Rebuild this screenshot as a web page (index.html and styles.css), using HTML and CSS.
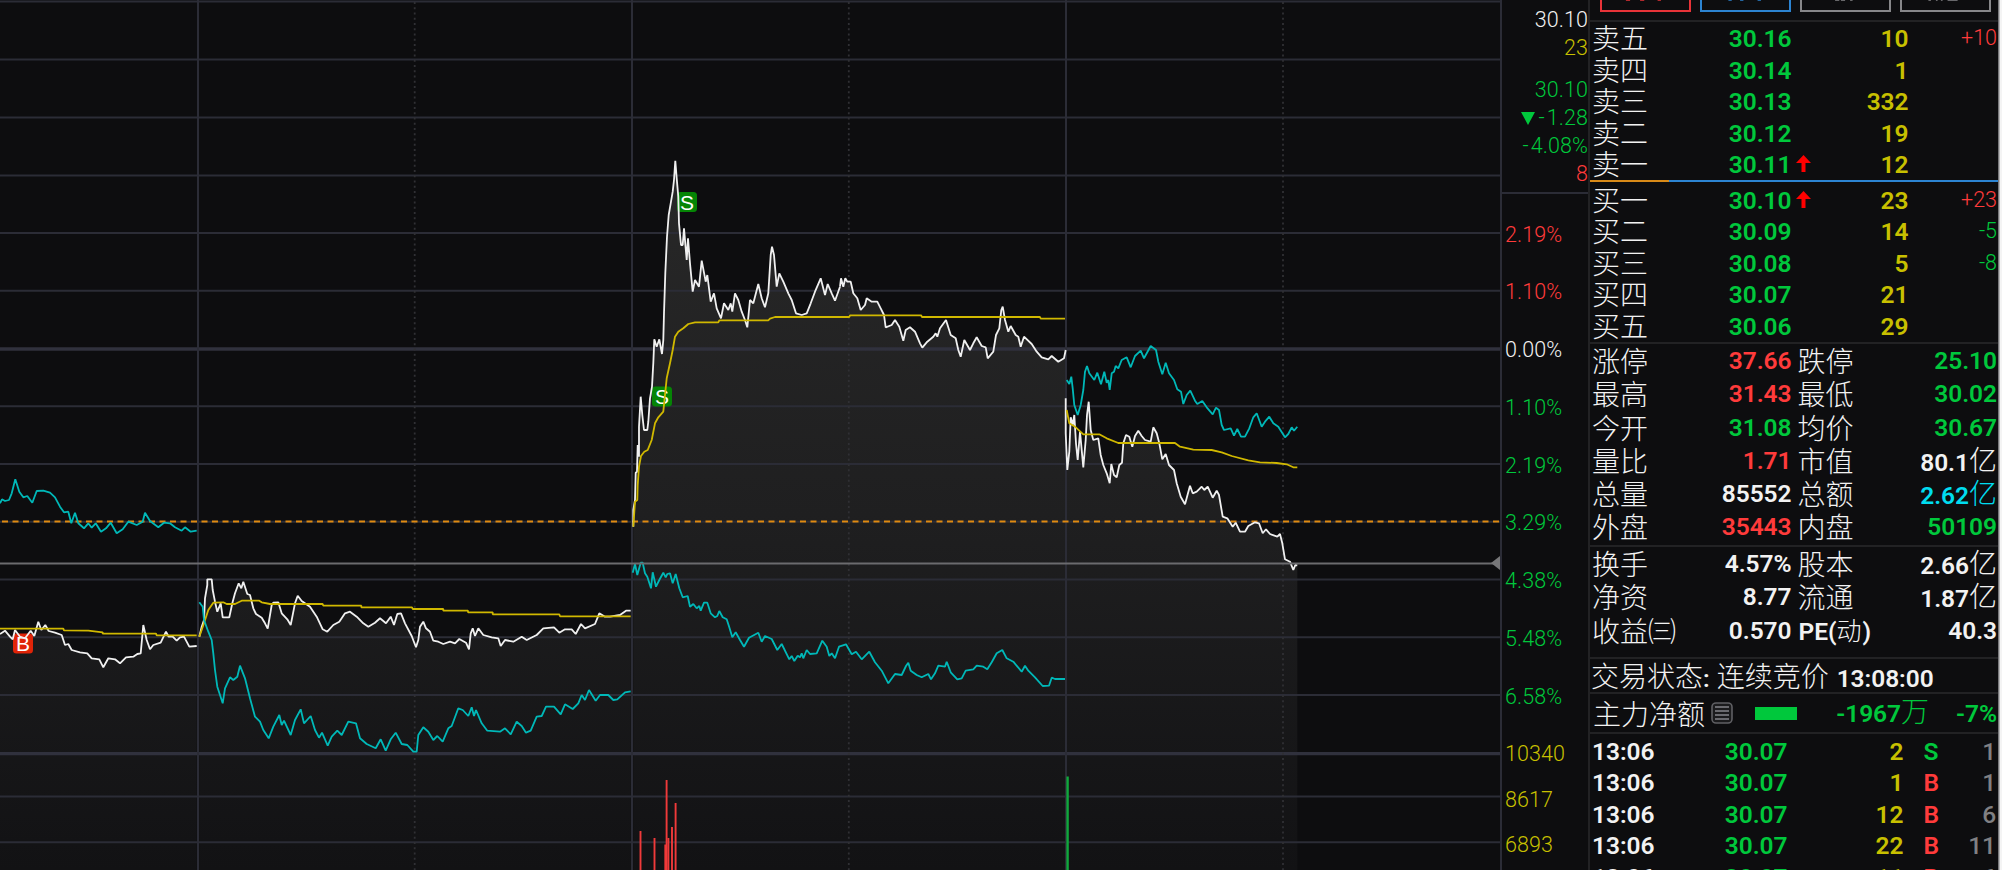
FILE: index.html
```html
<!DOCTYPE html>
<html lang="zh-CN">
<head>
<meta charset="utf-8">
<title>分时走势</title>
<link rel="stylesheet" href="styles.css">
</head>
<body>
<main class="app">
  <svg class="chart" id="chart" viewBox="0 0 1500 870" width="1500" height="870">
    <defs>
      <linearGradient id="area" gradientUnits="userSpaceOnUse" x1="0" y1="160" x2="0" y2="870">
        <stop offset="0" stop-color="#282828"/>
        <stop offset=".5" stop-color="#1f1f20"/>
        <stop offset="1" stop-color="#121214"/>
      </linearGradient>
    </defs>
    <g id="areas" fill="url(#area)"></g>
    <g id="grid"></g>
    <g id="badges"></g>
    <g id="lines"></g>
    <g id="volume"></g>
    <path d="M0 563.5H1500" stroke="#6b6b6e" stroke-width="2"/>
    <path d="M1500 556v14l-9-7z" fill="#777779"/>
  </svg>

  <section class="axis">
    <div class="tip">
      <span class="white">30.10</span><span class="yellow">23</span>
      <span class="green gap">30.10</span><span class="green"><svg class="down" viewBox="0 0 14 13"><path d="M0 0h14L7 13z" fill="#00c83c"/></svg><i class="minus">-</i>1.28</span>
      <span class="green"><i class="minus">-</i>4.08%</span><span class="red">8</span>
    </div>
    <div class="scale" id="scale"></div>
  </section>

  <aside class="panel">
    <div class="tabs">
      <svg class="tab t-red" viewBox="0 0 91 12"><path d="M22 0h5M39 0h5M60 0h4"/></svg>
      <svg class="tab t-blue" viewBox="0 0 91 12"><path d="M25 0h4M39 0h4M60 0h4"/></svg>
      <svg class="tab t-grey" viewBox="0 0 91 12"><path d="M33 0h5M40 0h5M51 0h3"/></svg>
      <svg class="tab t-grey" viewBox="0 0 91 12"><path d="M25 0h3M34 0h2M40 0h2M48 0h12"/></svg>
    </div>
    <div class="book asks" id="asks"></div>
    <div class="split"></div>
    <div class="book bids" id="bids"></div>
    <div class="stats s1" id="stats1"></div>
    <div class="stats s2" id="stats2"></div>
    <div class="status"><span class="cn">交易状态</span><b>:</b><span class="cn sp">连续竞价</span><b class="clock">13:08:00</b></div>
    <div class="net">
      <span class="cn">主力净额</span>
      <svg class="doc" viewBox="0 0 22 22"><rect x="1" y="1" width="20" height="20" rx="4" fill="#1b1b1d" stroke="#606064" stroke-width="1.6"/><path d="M4 5h14M4 9h14M4 13h14M4 17h14" stroke="#85858a" stroke-width="1.4"/></svg>
      <i class="bar"></i>
      <span class="amount green"><b>-1967</b><span class="cn">万</span></span>
      <b class="pct green">-7%</b>
    </div>
    <div class="trades" id="trades"></div>
  </aside>
  <div class="edge"></div>
</main>
<script src="main.js"></script>
</body>
</html>
```

FILE: styles.css
```css
body {
  margin: 0;
  background: #0d0d0f;
  font-family: Roboto, "Noto Sans CJK SC", sans-serif;
  color: #f2f2f2;
}
.app {
  display: flex;
  width: 2002px;
  height: 870px;
  overflow: hidden;
}
.chart { display: block; flex: none; }
.chart text {
  font-family: "Liberation Sans", sans-serif;
  font-size: 21px;
  text-anchor: middle;
  fill: #fff;
}

.white { color: #f2f2f2; }
.yellow { color: #c8c000; }
.green { color: #00c83c; }
.red { color: #ff3b3b; }
.cyan { color: #00dcf0; }
.grey { color: #808083; }
.cn {
  font-family: "Noto Sans CJK SC", sans-serif;
  font-size: 28px;
  font-weight: 300;
}
b {
  font-size: 24.5px;
  font-weight: 600;
  letter-spacing: -0.05px;
}

.axis {
  box-sizing: border-box;
  width: 90px;
  flex: none;
  border-left: 2px solid #2b2c36;
  border-right: 2px solid #222224;
  font-size: 21.5px;
  font-weight: 300;
  letter-spacing: 0.1px;
}
.tip {
  box-sizing: border-box;
  height: 194px;
  padding: 6px 0 0 0;
  border-bottom: 2px solid #2b2c36;
  display: flex;
  flex-direction: column;
  align-items: flex-end;
  line-height: 28px;
}
.tip .gap { margin-top: 14px; }
.down { width: 14px; height: 13px; margin-right: 3px; }
.minus { font-style: normal; margin-right: 2px; }
.scale { padding: 11.5px 0 0 3px; }
.scale div {
  height: 57.75px;
  line-height: 57.75px;
}
.scale .vol { height: 45.5px; }

.panel {
  width: 408px;
  height: 870px;
  flex: none;
  display: flex;
  flex-direction: column;
  overflow: hidden;
}
.panel > div { box-sizing: border-box; flex: none; }
.tabs {
  height: 22px;
  display: flex;
  gap: 9px;
  padding-left: 10px;
  border-bottom: 2px solid #222224;
}
.tab {
  box-sizing: border-box;
  width: 91px;
  height: 12px;
  border: 2px solid;
  border-top: 0;
  stroke: currentColor;
  stroke-width: 2;
  overflow: hidden;
}
.t-red { color: #e83338; }
.t-blue { color: #2c84d2; }
.t-grey { color: #87878a; }

.book .row {
  display: grid;
  grid-template-columns: 119px 82.5px 117px 88.5px;
  height: 31.5px;
  line-height: 31.5px;
  text-align: right;
}
.row { white-space: nowrap; }
.row .cn { text-align: left; padding-left: 2px; }
.book b { padding-top: 1px; }
.asks { height: 157.5px; }
.split {
  height: 2px;
  background: linear-gradient(90deg, #d88a18 79px, #2c84d2 79px);
}
.bids {
  height: 162.5px;
  padding-top: 2px;
  border-bottom: 2px solid #222224;
}
.price { position: relative; }
.price .up {
  position: absolute;
  left: 87px;
  top: 7px;
  width: 15px;
  height: 17px;
}
.delta { font-size: 21.5px; font-weight: 300; }

.stats .row {
  display: grid;
  grid-template-columns: 119px 82.5px 4px 85px 116.5px;
  height: 33.3px;
  line-height: 33.3px;
  text-align: right;
}
.stats .label2 { text-align: left; padding-left: 2px; }
.stats .label2 b { margin-left: 1px; }
.stats .label2 .cn { padding: 0; font-size: 28px; }
.stats .label2 .small { font-size: 25px; }
.stats .value .cn { padding: 0; }
.stats .nudge { margin-top: -1px; }
.s1 {
  height: 203px;
  border-bottom: 2px solid #222224;
}
.s2 {
  height: 112px;
  border-bottom: 2px solid #222224;
}
.status {
  height: 35px;
  line-height: 33px;
  padding-left: 1px;
  border-bottom: 2px solid #222224;
}
.status .sp { margin-left: 7px; }
.status .clock { margin-left: 8px; }
.net {
  height: 40px;
  line-height: 37px;
  padding: 0 1px 0 3px;
  display: flex;
  align-items: center;
  border-bottom: 2px solid #222224;
}
.doc { width: 22px; height: 22px; margin-left: 6px; }
.bar {
  width: 42px;
  height: 13px;
  margin-left: 22px;
  background: #00c83c;
}
.amount { margin-left: auto; }
.pct { width: 68px; text-align: right; }
.trades { padding-top: 1.5px; }
.trades .row {
  display: grid;
  grid-template-columns: 100px 97.5px 116px 20px 1fr;
  height: 31.5px;
  line-height: 32px;
  text-align: right;
  padding: 0 2px 0 0;
}
.trades .time { text-align: left; padding-left: 2px; }
.trades .side { padding-left: 20px; text-align: left; }
.trades .grey { font-weight: 500; }
.edge {
  width: 4px;
  flex: none;
  background: linear-gradient(90deg, #77777a 1px, #f4f4f4 2px);
}
```

FILE: main.js
```js
const NS = 'http://www.w3.org/2000/svg';
const $ = id => document.getElementById(id);
function draw(parent, tag, attrs, text) {
  const el = document.createElementNS(NS, tag);
  for (const k in attrs) el.setAttribute(k, attrs[k]);
  if (text) el.textContent = text;
  $(parent).appendChild(el);
}

/* Grid */
const GRID = '#2b2c36';
[1.5, 59.5, 117.5, 175.5, 233, 290.8, 406.3, 464, 521.7, 579.5, 637.2, 695, 796.6, 842.2].forEach(y =>
  draw('grid', 'path', { d: `M0 ${y}H1500`, stroke: GRID, 'stroke-width': 2 }));
[349, 753.6].forEach(y =>
  draw('grid', 'path', { d: `M0 ${y}H1500`, stroke: '#30313d', 'stroke-width': 3.4 }));
[198, 632, 1066].forEach(x =>
  draw('grid', 'path', { d: `M${x} 0V870`, stroke: GRID, 'stroke-width': 2 }));
[414.7, 848.8, 1283].forEach(x =>
  draw('grid', 'path', { d: `M${x} 2V870`, stroke: '#303034', 'stroke-width': 1.8, 'stroke-dasharray': '2 3.25' }));
draw('grid', 'path', { d: 'M2 521.5H1500', stroke: '#e08a10', 'stroke-width': 1.8, 'stroke-dasharray': '6 4.5' });

/* Badges */
[['B', 23, 643.5, '#e02408'], ['S', 687, 202, '#058505'], ['S', 662, 396.5, '#058505']].forEach(([t, x, y, fill]) => {
  draw('badges', 'rect', { x: x - 10, y: y - 10, width: 20, height: 20, rx: 3.5, fill });
  draw('badges', 'text', { x, y: y + 7.5 }, t);
});

/* Series: colour, origin, points in thirds of a pixel */
const W = '#f0f0f0', Y = '#d0b800', C = '#00b8b8';
const series = [
  [C, 0, 440, '0,190 6,178 15,183 27,180 35,160 46,118 58,155 70,172 82,168 97,188 110,153 130,152 150,158 165,172 180,200 192,217 205,215 214,250 225,218 235,250 252,265 265,250 275,263 287,250 303,275 318,265 332,248 350,280 368,268 385,245 410,255 428,245 435,218 450,243 475,262 492,248 510,250 525,262 545,272 555,262 572,275 590,272'],
  [W, 0, 440, '0,582 15,572 30,590 38,598 45,570 60,590 75,595 92,572 103,588 115,545 124,570 136,555 146,573 165,578 185,585 195,615 205,612 215,630 240,637 262,640 275,655 298,658 310,682 325,655 345,658 360,670 378,652 400,650 412,642 422,640 430,555 440,600 450,628 460,615 482,608 498,575 506,590 518,590 530,602 540,592 552,590 568,620 590,618'],
  [Y, 0, 440, '0,566 190,566 192,571 265,572 308,577 308,581 468,581 470,586 590,586'],
  [W, 0, 440, '598,590 605,560 612,540 615,475 622,435 622,418 635,418 638,450 645,485 652,515 662,490 668,532 688,532 697,490 705,460 716,430 724,445 730,425 742,462 750,465 760,505 768,522 785,533 795,550 803,566 815,495 820,488 835,487 845,520 862,538 872,555 885,490 893,467 905,483 930,500 950,530 968,568 982,575 1000,555 1018,545 1035,520 1050,515 1070,530 1090,550 1105,560 1125,548 1140,535 1158,550 1172,530 1182,555 1192,522 1203,520 1215,550 1235,588 1248,622 1255,600 1260,560 1270,545 1278,565 1290,575 1300,602 1315,605 1330,612 1350,605 1365,610 1378,597 1398,608 1407,628 1412,580 1418,565 1425,588 1435,565 1450,585 1475,592 1495,595 1502,618 1515,600 1540,605 1565,590 1580,600 1610,585 1630,565 1662,562 1678,578 1695,568 1715,568 1727,582 1743,552 1755,565 1785,552 1798,520 1815,530 1830,530 1860,525 1878,512 1892,512'],
  [Y, 0, 440, '598,590 612,550 625,510 640,488 670,487 680,492 705,492 725,482 778,482 785,487 810,492 968,492 970,497 1084,497 1084,502 1236,502 1238,507 1330,507 1330,512 1404,512 1404,517 1478,517 1478,523 1678,523 1680,529 1892,529'],
  [C, 0, 440, '598,487 608,500 612,540 625,575 635,600 640,640 645,690 652,740 668,790 675,745 690,712 700,720 712,710 720,677 735,715 750,775 765,830 780,845 790,870 806,895 820,860 838,825 845,855 852,842 872,885 885,840 902,808 912,850 932,828 945,870 957,893 966,878 983,917 995,890 1012,872 1025,885 1045,845 1068,850 1080,895 1100,912 1127,925 1142,898 1157,932 1172,898 1187,878 1205,912 1222,915 1240,935 1250,935 1255,885 1270,862 1285,875 1300,900 1312,888 1328,905 1345,865 1355,858 1375,805 1388,810 1405,828 1415,802 1422,828 1428,810 1445,850 1462,872 1500,875 1515,865 1532,883 1550,845 1565,858 1578,878 1592,872 1610,830 1625,828 1638,800 1662,800 1682,823 1695,793 1718,807 1735,790 1745,765 1755,780 1767,750 1787,782 1800,765 1825,765 1840,780 1852,778 1875,757 1892,754'],
  [W, 610, 140, '70,1160 70,1110 75,1080 77,998 81,995 83,915 87,950 87,860 92,770 97,825 102,870 112,870 115,845 120,775 126,740 130,670 133,598 140,620 148,598 156,642 160,600 162,520 166,400 171,290 176,225 182,190 188,155 192,120 196,62 200,115 205,170 207,250 213,315 218,315 222,265 230,360 234,295 240,370 248,455 255,420 267,440 275,362 287,425 292,405 302,485 312,460 320,505 333,535 342,490 355,510 362,490 367,515 375,460 385,480 395,515 405,540 412,562 420,480 430,490 445,432 455,475 465,502 475,460 482,345 486,320 492,345 500,440 508,400 520,425 535,460 545,480 558,520 575,525 590,520 602,490 615,455 632,415 645,465 653,432 665,460 675,482 690,440'],
  [W, 840, 220, '0,200 3,175 10,200 16,175 22,185 32,185 40,220 52,235 62,270 75,255 80,235 95,245 112,245 122,265 132,285 137,322 155,315 165,300 178,320 190,362 197,330 210,322 225,335 240,370 247,383 262,365 280,350 287,340 292,350 300,325 318,300 332,345 347,355 355,390 362,410 373,360 390,390 400,370 410,352 425,378 437,382 443,415 460,395 468,345 478,325 484,270 488,260 495,300 505,335 512,318 527,345 535,350 542,380 552,350 575,372 590,395 605,412 625,418 635,408 655,425 672,415 677,390'],
  [Y, 610, 140, '70,1160 75,1085 82,1080 83,1035 87,980 93,948 103,935 113,930 125,900 135,850 145,832 160,815 163,785 170,715 180,670 188,630 195,590 205,575 220,565 235,552 255,547 325,547 328,541 475,541 480,536 495,531 718,531 720,526 780,526 933,526 936,531 1290,531 1292,536 1365,536'],
  [C, 620, 540, '38,98 45,72 52,105 62,68 68,68 75,100 82,110 93,145 98,97 108,140 118,120 130,98 137,112 142,102 150,100 158,130 167,102 178,145 188,172 203,168 210,200 220,192 230,205 238,198 242,212 252,188 262,188 272,220 285,232 292,228 298,213 308,232 320,238 328,262 337,292 347,277 360,300 372,320 387,293 415,278 425,305 435,288 455,297 472,330 485,312 508,358 515,348 523,363 533,347 540,352 545,340 550,355 560,330 570,342 590,340 607,302 620,320 628,348 635,340 645,355 657,320 678,313 695,343 708,335 725,358 748,335 765,367 785,392 805,430 825,402 845,405 858,378 865,368 872,392 890,405 905,412 925,402 933,418 945,400 955,377 975,380 980,365 992,397 1012,418 1025,415 1037,392 1060,388 1070,377 1090,380 1102,388 1115,367 1130,340 1147,330 1160,355 1180,365 1205,395 1215,377 1225,392 1245,412 1268,438 1287,437 1295,413 1305,417 1335,417'],
  [W, 1040, 330, '77,205 77,310 82,420 88,365 92,262 98,285 103,255 108,340 113,390 120,305 130,412 137,330 141,255 146,215 152,300 160,330 175,325 182,375 190,405 200,430 209,460 214,402 222,435 230,442 238,405 246,398 250,340 258,315 268,320 277,350 285,318 295,302 305,318 315,330 332,335 340,292 350,310 358,340 367,388 377,372 387,405 402,420 410,460 422,500 435,523 450,467 458,490 470,485 485,470 493,480 503,470 518,503 530,482 537,495 548,560 562,565 578,590 587,578 600,605 615,605 625,588 645,577 657,580 668,610 678,598 690,612 712,620 720,612 727,640 735,688 750,695 760,720 766,705 772,706'],
  [Y, 1040, 330, '80,240 88,280 105,290 130,313 178,313 200,325 235,339 405,339 420,350 460,359 515,360 545,367 575,378 625,391 660,397 710,399 740,403 760,412 772,412'],
  [C, 1040, 330, '80,150 88,162 94,140 98,175 103,225 113,255 122,225 130,180 135,125 141,108 148,130 163,150 172,128 183,163 193,125 200,158 205,150 209,180 215,130 222,125 227,108 235,115 245,90 260,82 272,112 285,78 302,62 312,85 332,48 348,60 355,95 367,133 377,98 387,130 402,150 412,178 423,185 430,222 440,195 451,182 465,212 472,222 487,213 500,232 518,253 528,233 537,240 545,285 552,300 572,295 582,317 592,297 603,320 615,320 628,295 640,262 650,250 665,290 675,275 688,260 700,280 715,290 735,322 745,312 755,292 762,302 772,290']
];
series.forEach(([color, ox, oy, raw]) => {
  const pts = raw.split(' ').map(p => p.split(',')).map(([x, y]) => [+(ox + x / 3).toFixed(1), +(oy + y / 3).toFixed(1)]);
  const line = 'M' + pts.map(p => p.join(' ')).join('L');
  if (color === W) draw('areas', 'path', { d: `${line}V870H${pts[0][0]}Z` });
  draw('lines', 'path', { d: line, fill: 'none', stroke: color, 'stroke-width': 1.8, 'stroke-linejoin': 'bevel' });
});

/* Volume */
[[640.5, 831], [654.5, 838], [665.3, 844.5], [666.6, 780], [668.4, 838], [672, 827], [675.6, 803]].forEach(([x, y]) =>
  draw('volume', 'path', { d: `M${x} ${y}V870`, stroke: '#f03a3a', 'stroke-width': 1.9 }));
draw('volume', 'path', { d: 'M1067.6 776.5V870', stroke: '#10a83c', 'stroke-width': 2.4 });

/* Axis labels */
$('scale').innerHTML = [['2.19%', 'red'], ['1.10%', 'red'], ['0.00%', 'white'], ['1.10%', 'green'], ['2.19%', 'green'], ['3.29%', 'green'], ['4.38%', 'green'], ['5.48%', 'green'], ['6.58%', 'green']]
  .map(([t, c]) => `<div class="${c}">${t}</div>`).join('') +
  '<div class="yellow" style="height:51.5px">10340</div><div class="yellow vol" style="line-height:45.5px">8617</div><div class="yellow vol" style="line-height:45.5px">6893</div>';

/* Order book */
const arrow = '<svg class="up" viewBox="0 0 15 17"><path d="M7.5 0L15 8H9.5v9h-4V8H0z" fill="#ff0000"/></svg>';
const book = rows => rows.map(([l, p, v, d, up]) =>
  `<div class="row"><span class="cn">${l}</span><b class="price green">${p}${up ? arrow : ''}</b><b class="yellow">${v}</b><span class="delta ${d[0] === '+' ? 'red' : 'green'}">${d}</span></div>`).join('');
$('asks').innerHTML = book([['卖五', '30.16', 10, '+10'], ['卖四', '30.14', 1, ''], ['卖三', '30.13', 332, ''], ['卖二', '30.12', 19, ''], ['卖一', '30.11', 12, '', 1]]);
$('bids').innerHTML = book([['买一', '30.10', 23, '+23', 1], ['买二', '30.09', 14, '-5'], ['买三', '30.08', 5, '-8'], ['买四', '30.07', 21, ''], ['买五', '30.06', 29, '']]);

/* Statistics */
const stats = rows => rows.map(([a, v, c, b, w, d]) =>
  `<div class="row"><span class="cn">${a}</span><b class="${c}">${v}</b><i></i><span class="label2${b === 'PE' ? ' nudge' : ''}">${b === 'PE' ? '<b>PE(</b><span class="cn small">动</span><b>)</b>' : `<span class="cn">${b}</span>`}</span><span class="value ${d}${w.includes('亿') ? ' nudge' : ''}"><b>${w.replace('亿', '')}</b>${w.includes('亿') ? '<span class="cn">亿</span>' : ''}</span></div>`).join('');
$('stats1').innerHTML = stats([['涨停', '37.66', 'red', '跌停', '25.10', 'green'], ['最高', '31.43', 'red', '最低', '30.02', 'green'], ['今开', '31.08', 'green', '均价', '30.67', 'green'], ['量比', '1.71', 'red', '市值', '80.1亿', 'white'], ['总量', '85552', 'white', '总额', '2.62亿', 'cyan'], ['外盘', '35443', 'red', '内盘', '50109', 'green']]);
$('stats2').innerHTML = stats([['换手', '4.57%', 'white', '股本', '2.66亿', 'white'], ['净资', '8.77', 'white', '流通', '1.87亿', 'white'], ['收益㈢', '0.570', 'white', 'PE', '40.3', 'white']]);

/* Trades */
$('trades').innerHTML = [[2, 'S', 1], [1, 'B', 1], [12, 'B', 6], [22, 'B', 11], [11, 'B', 6]].map(([v, s, n]) =>
  `<div class="row"><b class="time">13:06</b><b class="green">30.07</b><b class="yellow">${v}</b><b class="side ${s === 'S' ? 'green' : 'red'}">${s}</b><b class="grey">${n}</b></div>`).join('');
```
